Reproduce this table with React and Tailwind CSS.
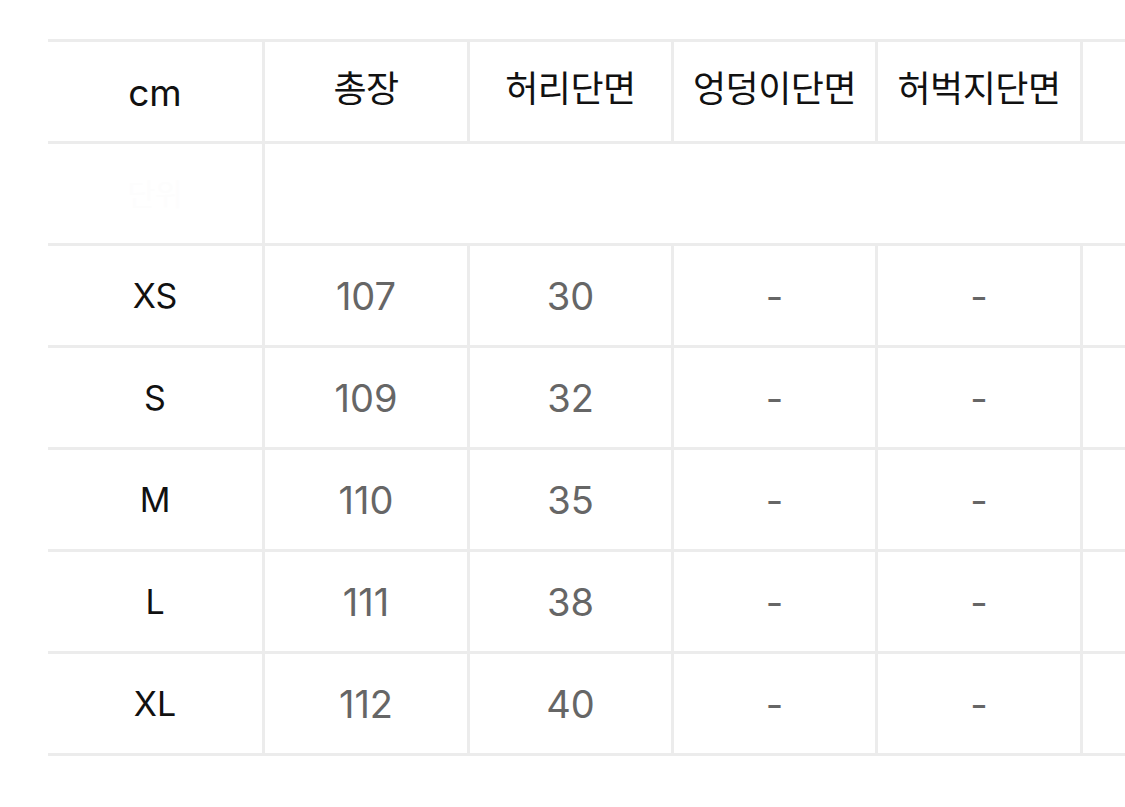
import React from 'react';

const headers = ['cm', '총장', '허리단면', '엉덩이단면', '허벅지단면', ''];

const rows = [
    ['XS', '107', '30', '-', '-', ''],
    ['S', '109', '32', '-', '-', ''],
    ['M', '110', '35', '-', '-', ''],
    ['L', '111', '38', '-', '-', ''],
    ['XL', '112', '40', '-', '-', ''],
];

const font = { fontFamily: 'Inter, "Noto Sans CJK KR", sans-serif' };

const Cell = ({ children, className = '' }) => (
    <div className={`h-[102px] flex items-center justify-center leading-none border-b-[3px] border-r-[3px] border-[#ececec] ${className}`}>
        {children}
    </div>
);

const App = () => {
    return (
        <div className="w-[1125px] h-[807px] bg-white overflow-hidden" style={font}>
            <div className="ml-[48px] mt-[39px] w-[1260px] grid grid-cols-[217px_205px_204px_204px_205px_425px] border-t-[3px] border-[#ececec]">
                {headers.map((h, i) => (
                    <Cell
                        key={`h${i}`}
                        className={i === 0 ? 'text-[37px] text-[#111111] pt-[2px]' : 'text-[36px] text-[#111111] tracking-[-0.5px] pb-[6px]'}
                    >
                        {h}
                    </Cell>
                ))}

                <Cell className="text-[30px] text-[#fdfdfd]">단위</Cell>
                <Cell className="col-span-5 border-r-0" />

                {rows.map((row, r) =>
                    row.map((v, i) => (
                        <Cell
                            key={`r${r}c${i}`}
                            className={i === 0 ? 'text-[34px] text-[#111111]' : 'text-[38px] text-[#666666]'}
                        >
                            {v}
                        </Cell>
                    ))
                )}
            </div>
        </div>
    );
};

export default App;
